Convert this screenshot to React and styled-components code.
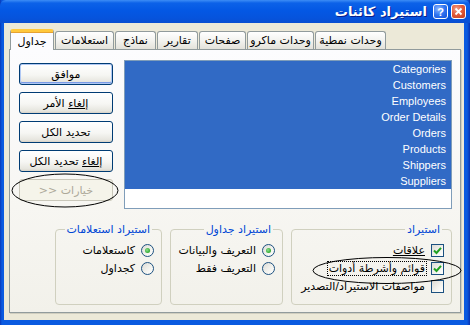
import React from "react";
import styled, { createGlobalStyle, css } from "styled-components";

const GlobalStyle = createGlobalStyle`
    html, body {
        margin: 0;
        padding: 0;
        background: #ffffff;
    }
    * {
        box-sizing: border-box;
    }
`;

const arabic = `"DejaVu Sans", "Liberation Sans", sans-serif`;

const Window = styled.div`
    position: relative;
    width: 470px;
    height: 325px;
    display: flex;
    flex-direction: column;
    padding: 0 6px 5px 4px;
    background: linear-gradient(90deg, #0838b8 0, #0a5ae0 2px, #0a5ae0 calc(100% - 3px), #0631b0 100%);
    border-bottom: 0;
    overflow: hidden;
`;

const TitleBar = styled.div`
    direction: rtl;
    height: 23px;
    margin: 0 -6px 0 -4px;
    padding: 0 4px;
    display: flex;
    align-items: center;
    gap: 3px;
    background: linear-gradient(180deg, #3d8df6 0, #0c62e8 3px, #0458e4 45%, #0653dc 80%, #0a4ed0 100%);
    border-radius: 6px 6px 0 0;
`;

const CaptionButton = styled.div`
    width: 15px;
    height: 15px;
    border: 1px solid #ffffff;
    border-radius: 3px;
    display: flex;
    align-items: center;
    justify-content: center;
    color: #ffffff;
    font: bold 11px "Liberation Sans", sans-serif;
    ${(p) =>
        p.$close
            ? css`
                  background: radial-gradient(circle at 35% 30%, #f2a08a 0, #e35d3c 45%, #c23b1c 100%);
              `
            : css`
                  background: radial-gradient(circle at 35% 30%, #8fb8ff 0, #2f74f0 50%, #1550d8 100%);
              `}
`;

const Title = styled.div`
    margin-right: 3px;
    color: #ffffff;
    font: bold 13px ${arabic};
    text-shadow: 1px 1px 0 #0a1e8a;
    white-space: nowrap;
`;

const Client = styled.div`
    flex: 1;
    display: flex;
    flex-direction: column;
    background: #ece9d8;
    padding-top: 6px;
`;

const TabStrip = styled.div`
    direction: ltr;
    height: 20px;
    padding-left: 6px;
    display: flex;
    align-items: flex-end;
`;

const Tab = styled.div`
    position: relative;
    width: ${(p) => p.$w}px;
    height: 18px;
    margin-right: 1px;
    display: flex;
    align-items: center;
    justify-content: center;
    border: 1px solid #919b9c;
    border-bottom: 0;
    border-radius: 3px 3px 0 0;
    background: linear-gradient(180deg, #ffffff 0, #f3f3ef 50%, #e3e2da 100%);
    font: 11px ${arabic};
    color: #000000;
    white-space: nowrap;
    direction: rtl;
    ${(p) =>
        p.$active &&
        css`
            z-index: 1;
            height: 21px;
            margin-bottom: -1px;
            padding-top: 1px;
            background: #fcfcfe;
            border-top: 3px solid #ffc83c;
            box-shadow: inset 0 1px 0 #e6a232;
        `}
`;

const Panel = styled.div`
    direction: rtl;
    height: 264px;
    margin: 0 3px 0 5px;
    padding: 10px 8px 0 9px;
    display: flex;
    flex-direction: column;
    border: 1px solid #919b9c;
    background: linear-gradient(180deg, #fcfcfe 0, #f7f6f2 60%, #f2f1ea 100%);
    box-shadow: 1px 1px 0 #d0cebf;
`;

const TopRow = styled.div`
    display: flex;
    gap: 11px;
`;

const ListBox = styled.div`
    width: 329px;
    height: 149px;
    border: 1px solid #7f9db9;
    background: #ffffff;
    direction: ltr;
    display: flex;
    flex-direction: column;
`;

const ListRow = styled.div`
    height: 16px;
    line-height: 16px;
    padding-right: 5px;
    text-align: right;
    background: #316ac5;
    color: #ffffff;
    font: 11px "Liberation Sans", sans-serif;
    line-height: 16px;
`;

const ButtonColumn = styled.div`
    width: 94px;
    padding-top: 3px;
    display: flex;
    flex-direction: column;
    gap: 7px;
`;

const Button = styled.div`
    height: 22px;
    display: flex;
    align-items: center;
    justify-content: center;
    border: 1px solid #003c74;
    border-radius: 3px;
    background: linear-gradient(180deg, #ffffff 0, #f6f6f3 55%, #e6e5de 90%, #d6d0c5 100%);
    font: 11px ${arabic};
    color: #000000;
    white-space: nowrap;
    ${(p) =>
        p.$default &&
        css`
            box-shadow: inset 0 0 0 1px #b0c8f4, inset 0 -1px 0 1px #7a9ae6;
        `}
    ${(p) =>
        p.$disabled &&
        css`
            border-color: #c9c7ba;
            background: #f5f4ea;
            color: #aca899;
        `}
`;

const Key = styled.span`
    text-decoration: underline;
`;

const GroupRow = styled.div`
    margin-top: 14px;
    display: flex;
    gap: 8px;
`;

const Group = styled.fieldset`
    width: ${(p) => p.$w}px;
    height: 82px;
    margin: 0;
    padding: 5px 7px 0 4px;
    border: 1px solid #d0d0bf;
    border-radius: 4px;
    display: flex;
    flex-direction: column;
`;

const Legend = styled.legend`
    padding: 0 2px;
    margin-right: 2px;
    color: #0046d5;
    font: 11px ${arabic};
    line-height: 13px;
`;

const OptionRow = styled.div`
    height: 18px;
    display: flex;
    align-items: center;
    gap: 5px;
    font: 11px ${arabic};
    color: #000000;
    white-space: nowrap;
`;

const OptionText = styled.span`
    padding: 0 1px;
    line-height: 13px;
    ${(p) =>
        p.$focus &&
        css`
            outline: 1px dotted #000000;
        `}
`;

const CheckBox = styled.div`
    width: 13px;
    height: 13px;
    flex: none;
    border: 1px solid #1c5180;
    background: linear-gradient(135deg, #dcdbd5 0, #f4f4f0 60%, #ffffff 100%);
    display: flex;
    align-items: center;
    justify-content: center;
`;

const Radio = styled.div`
    width: 13px;
    height: 13px;
    flex: none;
    border: 1px solid #1c5180;
    border-radius: 50%;
    background: linear-gradient(135deg, #dcdbd5 0, #f4f4f0 60%, #ffffff 100%);
    display: flex;
    align-items: center;
    justify-content: center;

    &::after {
        content: "";
        width: 5px;
        height: 5px;
        border-radius: 50%;
        background: radial-gradient(circle at 40% 40%, #8ee08e 0, #2fa82f 70%, #1e8a1e 100%);
        display: ${(p) => (p.$on ? "block" : "none")};
    }
`;

const Annotation = styled.svg`
    position: absolute;
    left: 0;
    top: 0;
    pointer-events: none;
`;

const tabs = [
    { label: "جداول", w: 44, active: true },
    { label: "استعلامات", w: 59 },
    { label: "نماذج", w: 41 },
    { label: "تقارير", w: 41 },
    { label: "صفحات", w: 47 },
    { label: "وحدات ماكرو", w: 67 },
    { label: "وحدات نمطية", w: 71 },
];

const tables = [
    "Categories",
    "Customers",
    "Employees",
    "Order Details",
    "Orders",
    "Products",
    "Shippers",
    "Suppliers",
];

function Check({ on }) {
    return (
        <CheckBox>
            {on && (
                <svg width="9" height="9" viewBox="0 0 9 9">
                    <path d="M1 4.5 L3.5 7 L8 1.8" fill="none" stroke="#21a121" strokeWidth="2" />
                </svg>
            )}
        </CheckBox>
    );
}

export default function App() {
    return (
        <>
            <GlobalStyle />
            <Window>
                <TitleBar>
                    <CaptionButton $close>
                        <svg width="9" height="9" viewBox="0 0 9 9">
                            <path d="M1.5 1.5 L7.5 7.5 M7.5 1.5 L1.5 7.5" stroke="#fff" strokeWidth="1.8" />
                        </svg>
                    </CaptionButton>
                    <CaptionButton>?</CaptionButton>
                    <Title>استيراد كائنات</Title>
                </TitleBar>
                <Client>
                    <TabStrip>
                        {tabs.map((t) => (
                            <Tab key={t.label} $w={t.w} $active={t.active}>
                                {t.label}
                            </Tab>
                        ))}
                    </TabStrip>
                    <Panel>
                        <TopRow>
                            <ListBox>
                                {tables.map((name) => (
                                    <ListRow key={name}>{name}</ListRow>
                                ))}
                            </ListBox>
                            <ButtonColumn>
                                <Button $default>موافق</Button>
                                <Button>
                                    <Key>إلغاء</Key>&nbsp;الأمر
                                </Button>
                                <Button>تحديد الكل</Button>
                                <Button>
                                    <Key>إلغاء</Key>&nbsp;تحديد الكل
                                </Button>
                                <Button $disabled>خيارات &lt;&lt;</Button>
                            </ButtonColumn>
                        </TopRow>
                        <GroupRow>
                            <Group $w={161}>
                                <Legend>استيراد</Legend>
                                <OptionRow>
                                    <Check on />
                                    <OptionText>
                                        <Key>علاقات</Key>
                                    </OptionText>
                                </OptionRow>
                                <OptionRow>
                                    <Check on />
                                    <OptionText $focus>قوائم وأشرطة أدوات</OptionText>
                                </OptionRow>
                                <OptionRow>
                                    <Check />
                                    <OptionText>مواصفات الاستيراد/التصدير</OptionText>
                                </OptionRow>
                            </Group>
                            <Group $w={113}>
                                <Legend>استيراد جداول</Legend>
                                <OptionRow>
                                    <Radio $on />
                                    <OptionText>التعريف والبيانات</OptionText>
                                </OptionRow>
                                <OptionRow>
                                    <Radio />
                                    <OptionText>التعريف فقط</OptionText>
                                </OptionRow>
                            </Group>
                            <Group $w={107}>
                                <Legend>استيراد استعلامات</Legend>
                                <OptionRow>
                                    <Radio $on />
                                    <OptionText>كاستعلامات</OptionText>
                                </OptionRow>
                                <OptionRow>
                                    <Radio />
                                    <OptionText>كجداول</OptionText>
                                </OptionRow>
                            </Group>
                        </GroupRow>
                    </Panel>
                </Client>
                <Annotation width="470" height="325">
                    <ellipse cx="65" cy="190.5" rx="53" ry="16.5" fill="none" stroke="#000" strokeWidth="1" />
                    <ellipse cx="387" cy="270.5" rx="74" ry="13" fill="none" stroke="#000" strokeWidth="1" />
                </Annotation>
            </Window>
        </>
    );
}
